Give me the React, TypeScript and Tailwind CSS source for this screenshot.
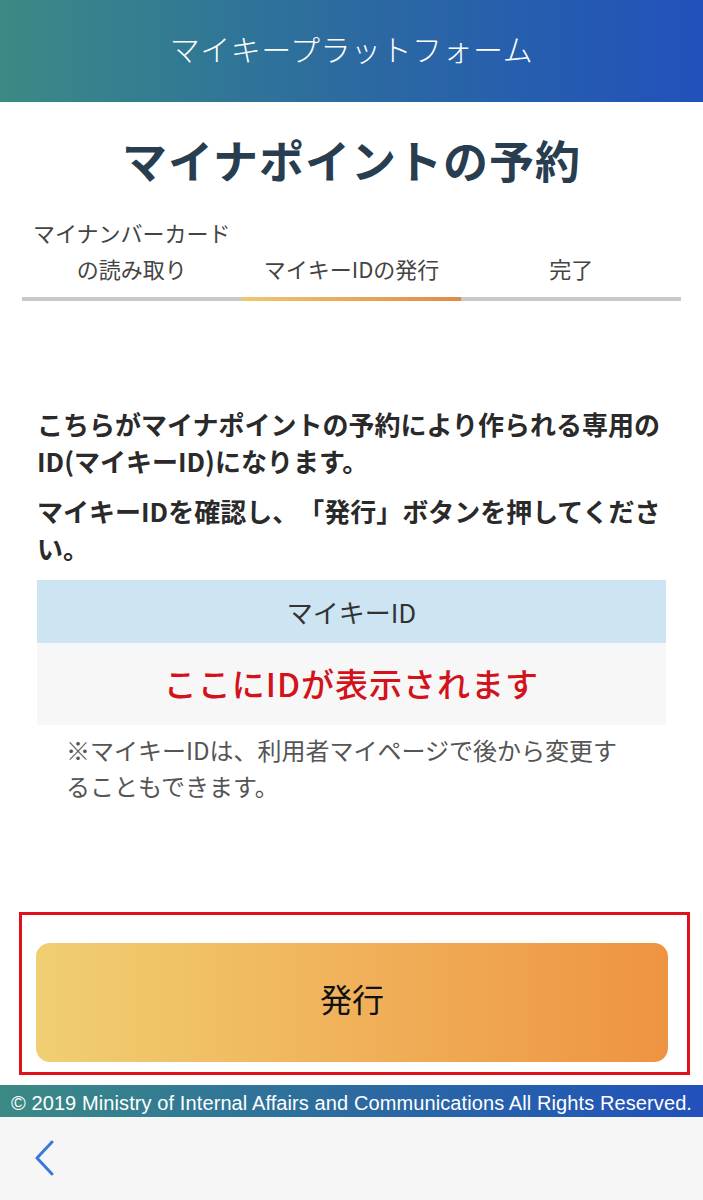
import React from 'react';

const jp = "font-['Noto_Sans_CJK_JP',sans-serif] [text-spacing-trim:space-all]";

const steps = [
  { label: <>マイナンバーカード<br />の読み取り</>, active: false },
  { label: <>マイキーIDの発行</>, active: true },
  { label: <>完了</>, active: false },
];

export default function App() {
  return (
    <div className={`w-[703px] h-[1200px] bg-white flex flex-col ${jp}`}>
      <header className="h-[102px] shrink-0 flex items-center justify-center bg-gradient-to-r from-[#3b8a84] via-[#2c6aa0] to-[#2350bb]">
        <h1 className="text-white text-[30px] font-light tracking-[0.5px] -mt-[6px]">マイキープラットフォーム</h1>
      </header>

      <h2 className="mt-[24px] text-center text-[45px] leading-[68px] font-bold text-[#283d4f] tracking-[1px]">
        マイナポイントの予約
      </h2>

      <div className="mx-[22px] mt-[20px] grid grid-cols-3">
        {steps.map((s, i) => (
          <div key={i} className="flex flex-col justify-end">
            <div className="text-center text-[22px] leading-[36px] text-[#444] pb-[11px]">{s.label}</div>
            <div
              className={
                s.active
                  ? 'h-[4px] bg-gradient-to-r from-[#efc672] to-[#dd8c4a]'
                  : 'h-[4px] bg-[#c9c9c9]'
              }
            />
          </div>
        ))}
      </div>

      <div className="mx-[37px] mt-[104px]">
        <p className="text-[26px] leading-[37px] font-bold text-[#2a2a2a]">
          こちらがマイナポイントの予約により作られる専用のID(マイキーID)になります。
        </p>
        <p className="mt-[13px] text-[26px] leading-[37px] font-bold text-[#2a2a2a]">
          マイキーIDを確認し、「発行」ボタンを押してください。
        </p>

        <div className="mt-[14px]">
          <div className="h-[63px] bg-[#cde5f2] flex items-center justify-center text-[26px] text-[#333]">
            マイキーID
          </div>
          <div className="h-[82px] bg-[#f7f7f7] flex items-center justify-center text-[33px] font-medium text-[#d3121b] tracking-[1px]">
            ここにIDが表示されます
          </div>
        </div>

        <p className="mt-[7px] pl-[29px] pr-[40px] text-[24px] leading-[36px] text-[#555]">
          ※マイキーIDは、利用者マイページで後から変更することもできます。
        </p>
      </div>

      <div className="ml-[19px] mr-[13px] mt-[108px] h-[163px] border-[3px] border-[#e0101c] pt-[28px] pl-[14px] pr-[19px]">
        <button className="w-full h-[119px] pb-[10px] rounded-[14px] bg-gradient-to-r from-[#f0cf72] to-[#ee9341] text-[32px] text-[#111]">
          発行
        </button>
      </div>

      <div className="mt-[10px] h-[32px] shrink-0 flex items-center justify-center bg-gradient-to-r from-[#3b8a84] via-[#2c6aa0] to-[#2350bb]">
        <span className="text-white text-[20px] leading-[32px] font-['Liberation_Sans',sans-serif] whitespace-nowrap mt-[3px] tracking-[0.1px]">
          © 2019 Ministry of Internal Affairs and Communications All Rights Reserved.
        </span>
      </div>

      <div className="flex-1 bg-[#f6f6f6] flex items-center pl-[33px]">
        <svg width="22" height="36" viewBox="0 0 22 36" fill="none" className="-mt-[2px]">
          <path d="M19 2 L4 18 L19 34" stroke="#3b78dc" strokeWidth="3" strokeLinecap="round" strokeLinejoin="round" />
        </svg>
      </div>
    </div>
  );
}
